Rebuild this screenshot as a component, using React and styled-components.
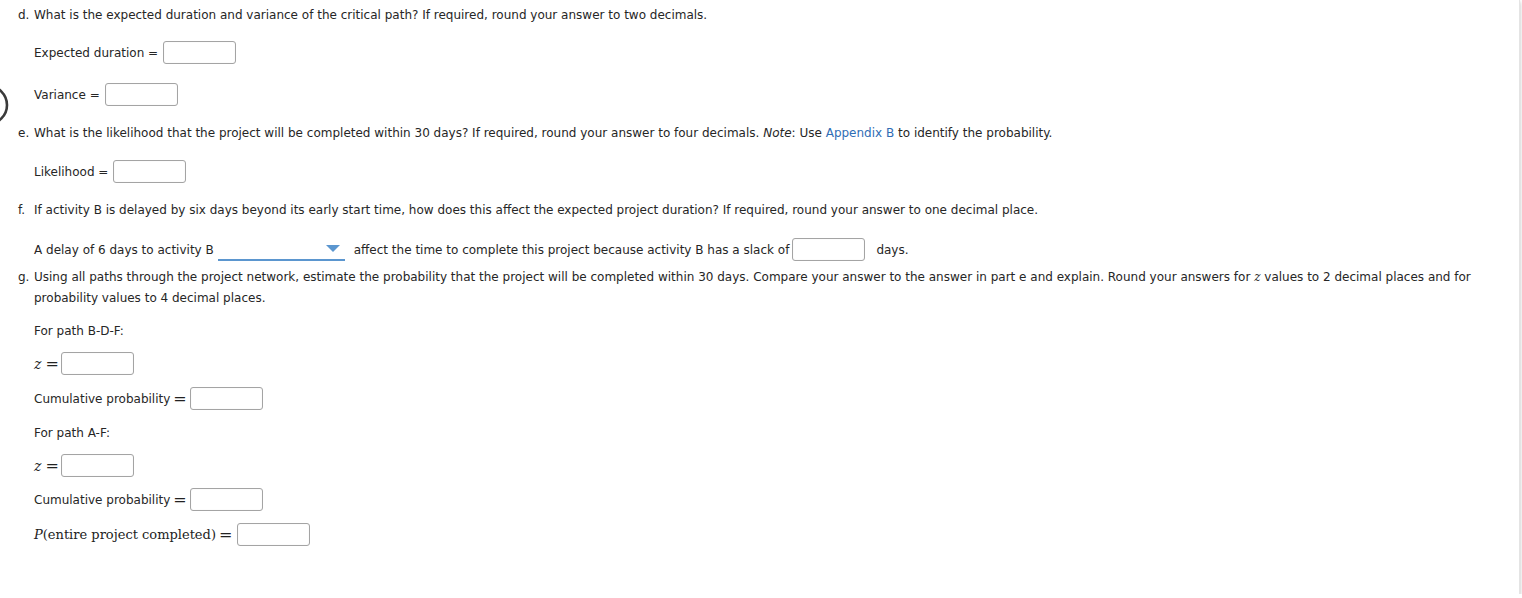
import React from "react";
import styled, { createGlobalStyle } from "styled-components";

const Global = createGlobalStyle`
  html, body { margin: 0; padding: 0; background: #fff; }
  body { font-family: "DejaVu Sans", Verdana, sans-serif; }
`;

const Page = styled.div`
  position: relative;
  width: 1520px;
  height: 594px;
  border-right: 1px solid #e4e4e4;
  box-shadow: 0 2px 4px 0 #bdbdbd;
  overflow: hidden;
  color: #262626;
  font-size: 12px;
  padding: 5px 0 0 18px;
  box-sizing: border-box;
`;

const Ring = styled.svg`
  position: absolute;
  left: 0;
  top: 83px;
`;

const Question = styled.div`
  display: flex;
  line-height: 21px;
  margin-top: ${(p) => p.$top || 0}px;
`;

const Marker = styled.span`
  width: 16px;
  flex: none;
`;

const QText = styled.div`
  flex: 1;
  padding-right: 30px;
`;

const Link = styled.span`
  color: #2f6db5;
`;

const Var = styled.i`
  font-family: "DejaVu Serif", "Liberation Serif", serif;
`;

const Row = styled.div`
  display: flex;
  align-items: center;
  padding-left: 16px;
  height: 23px;
  margin-top: ${(p) => p.$top || 0}px;
`;

const Label = styled.span`
  white-space: pre;
`;

const Math = styled.span`
  font-family: "DejaVu Serif", "Liberation Serif", serif;
  font-size: ${(p) => p.$size || 14}px;
  color: #222;
  white-space: pre;
`;

const Eq = styled.span`
  font-family: "DejaVu Serif", "Liberation Serif", serif;
  font-size: 16px;
  color: #222;
  margin: 0 1px 0 ${(p) => p.$left || 3}px;
`;

const Input = styled.span`
  display: inline-block;
  width: 71px;
  height: 21px;
  border: 1px solid #a4a4a4;
  border-radius: 3px;
  margin-left: ${(p) => p.$gap || 3}px;
  margin-right: ${(p) => p.$right || 0}px;
  box-shadow: inset 0 0 1px #ddd;
`;

const Select = styled.span`
  display: inline-flex;
  justify-content: flex-end;
  align-items: center;
  box-sizing: border-box;
  width: 127px;
  height: 23px;
  margin: 0 9px 0 4px;
  padding: 0 5px 0 0;
  border-bottom: 2px solid #5b96cf;
`;

const Caret = styled.span`
  width: 0;
  height: 0;
  border-left: 7px solid transparent;
  border-right: 7px solid transparent;
  border-top: 7px solid #5b96cf;
`;

export default function App() {
  return (
    <>
      <Global />
      <Page>
        <Ring width="12" height="44" viewBox="0 0 12 44">
          <circle cx="-12" cy="22" r="19" fill="none" stroke="#3a3a3a" strokeWidth="2.6" />
        </Ring>

        <Question>
          <Marker>d.</Marker>
          <QText>What is the expected duration and variance of the critical path? If required, round your answer to two decimals.</QText>
        </Question>
        <Row $top={15}>
          <Label>Expected duration = </Label>
          <Input $gap={1} />
        </Row>
        <Row $top={19}>
          <Label>Variance = </Label>
          <Input $gap={1} />
        </Row>

        <Question $top={17}>
          <Marker>e.</Marker>
          <QText>
            What is the likelihood that the project will be completed within 30 days? If required, round your answer to four decimals. <i>Note</i>: Use <Link>Appendix B</Link> to identify the probability.
          </QText>
        </Question>
        <Row $top={16}>
          <Label>Likelihood = </Label>
          <Input $gap={1} />
        </Row>

        <Question $top={17}>
          <Marker>f.</Marker>
          <QText>If activity B is delayed by six days beyond its early start time, how does this affect the expected project duration? If required, round your answer to one decimal place.</QText>
        </Question>
        <Row $top={17}>
          <Label>A delay of 6 days to activity B</Label>
          <Select>
            <Caret />
          </Select>
          <Label>affect the time to complete this project because activity B has a slack of</Label>
          <Input $gap={3} $right={11} />
          <Label>days.</Label>
        </Row>

        <Question $top={6}>
          <Marker>g.</Marker>
          <QText>
            Using all paths through the project network, estimate the probability that the project will be completed within 30 days. Compare your answer to the answer in part e and explain. Round your answers for <Var>z</Var> values to 2 decimal places and for probability values to 4 decimal places.
          </QText>
        </Question>

        <Row $top={10}>
          <Label>For path B-D-F:</Label>
        </Row>
        <Row $top={10}>
          <Math><i>z</i></Math>
          <Eq $left={4}>=</Eq>
          <Input $gap={1} />
        </Row>
        <Row $top={12}>
          <Label>Cumulative probability</Label>
          <Eq>=</Eq>
          <Input $gap={2} />
        </Row>
        <Row $top={11}>
          <Label>For path A-F:</Label>
        </Row>
        <Row $top={10}>
          <Math><i>z</i></Math>
          <Eq $left={4}>=</Eq>
          <Input $gap={1} />
        </Row>
        <Row $top={11}>
          <Label>Cumulative probability</Label>
          <Eq>=</Eq>
          <Input $gap={2} />
        </Row>
        <Row $top={12}>
          <Math $size={13}><i>P</i>(entire project completed)</Math>
          <Eq>=</Eq>
          <Input $gap={4} />
        </Row>
      </Page>
    </>
  );
}
